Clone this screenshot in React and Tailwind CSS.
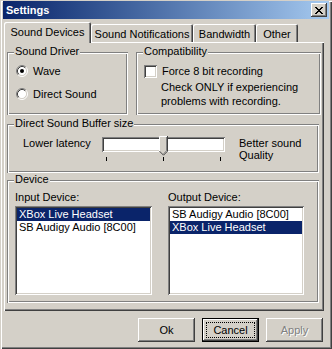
import React from 'react';

const FONT = { fontFamily: '"Liberation Sans", Arial, sans-serif' };

const RAISED =
  'shadow-[inset_-1px_-1px_0_#404040,inset_1px_1px_0_#ffffff,inset_-2px_-2px_0_#808080,inset_2px_2px_0_#d4d0c8]';
const SUNKEN =
  'shadow-[inset_1px_1px_0_#808080,inset_-1px_-1px_0_#ffffff,inset_2px_2px_0_#404040,inset_-2px_-2px_0_#d4d0c8]';
const ETCHED =
  'shadow-[inset_1px_1px_0_#808080,inset_-1px_-1px_0_#ffffff,inset_2px_2px_0_#ffffff,inset_-2px_-2px_0_#808080]';

function CloseGlyph() {
  const rows = ['11000011', '01100110', '00111100', '00011000', '00111100', '01100110', '11000011'];
  return (
    <svg width="8" height="7" viewBox="0 0 8 7" shapeRendering="crispEdges">
      {rows.map((r, y) =>
        r.split('').map((c, x) => (c === '1' ? <rect key={`${x}-${y}`} x={x} y={y} width="1" height="1" fill="#000" /> : null))
      )}
    </svg>
  );
}

function Radio({ checked }) {
  return (
    <svg width="12" height="12" viewBox="0 0 12 12" className="shrink-0">
      <circle cx="6" cy="6" r="4.5" fill="#fff" />
      <path d="M2.11 9.89 A5.5 5.5 0 0 1 9.89 2.11" stroke="#808080" fill="none" />
      <path d="M9.89 2.11 A5.5 5.5 0 0 1 2.11 9.89" stroke="#ffffff" fill="none" />
      <path d="M2.82 9.18 A4.5 4.5 0 0 1 9.18 2.82" stroke="#404040" fill="none" />
      <path d="M9.18 2.82 A4.5 4.5 0 0 1 2.82 9.18" stroke="#d4d0c8" fill="none" />
      {checked && <circle cx="6" cy="6" r="2" fill="#000" />}
    </svg>
  );
}

function Group({ title, className, children }) {
  return (
    <div className={`relative ${ETCHED} ${className}`}>
      <span className="absolute left-[7px] top-[-7px] bg-[#d4d0c8] px-px leading-[13px]">{title}</span>
      {children}
    </div>
  );
}

function ListBox({ items, selected }) {
  return (
    <div className={`bg-white p-[2px] w-full h-[89px] ${SUNKEN}`}>
      {items.map((it, i) => (
        <div
          key={it}
          className={`h-[13px] leading-[13px] pl-[2px] whitespace-nowrap ${i === selected ? 'bg-[#0a246a] text-white' : ''}`}
        >
          {it}
        </div>
      ))}
    </div>
  );
}

function Button({ label, isDefault, disabled }) {
  if (isDefault) {
    return (
      <div className="w-[57px] h-[24px] border border-black bg-[#d4d0c8]">
        <div className={`w-full h-full flex items-center justify-center p-[3px] ${RAISED}`}>
          <div className="w-full h-full border border-dotted border-black flex items-center justify-center leading-none">
            {label}
          </div>
        </div>
      </div>
    );
  }
  return (
    <div
      className={`w-[57px] h-[24px] flex items-center justify-center ${RAISED} ${
        disabled ? 'text-[#808080] [text-shadow:1px_1px_0_#ffffff]' : ''
      }`}
    >
      {label}
    </div>
  );
}

export default function App() {
  return (
    <div
      style={FONT}
      className="w-[332px] h-[349px] bg-[#d4d0c8] text-black text-[11px] pt-px px-[3px] shadow-[inset_1px_1px_0_#d4d0c8,inset_2px_2px_0_#ffffff,inset_-1px_-1px_0_#404040,inset_-2px_-2px_0_#808080] overflow-hidden"
    >
      {/* title bar */}
      <div className="h-[18px] flex items-center justify-between pl-[3px] pr-[2px] bg-linear-to-r from-[#0a246a] to-[#a6caf0]">
        <span className="text-white font-bold leading-none">Settings</span>
        <div className={`w-[16px] h-[14px] bg-[#d4d0c8] flex items-center justify-center ${RAISED}`}>
          <CloseGlyph />
        </div>
      </div>

      {/* tabs */}
      <div className="mt-[3px] ml-px h-[20px] flex items-end">
        <div className="relative z-10 -mb-px w-[87px] h-[21px] bg-[#d4d0c8] rounded-tl-[2px] rounded-tr-[2px] shadow-[inset_1px_1px_0_#ffffff,inset_-1px_0_0_#404040,inset_-2px_0_0_#808080] flex justify-center pt-[4px] leading-[13px]">
          Sound Devices
        </div>
        <div className="w-[102px] h-[18px] rounded-tl-[2px] rounded-tr-[2px] shadow-[inset_1px_1px_0_#ffffff,inset_-1px_0_0_#404040,inset_-2px_0_0_#808080] flex justify-center pt-[4px] leading-[13px]">
          Sound Notifications
        </div>
        <div className="w-[63px] h-[18px] rounded-tl-[2px] rounded-tr-[2px] shadow-[inset_1px_1px_0_#ffffff,inset_-1px_0_0_#404040,inset_-2px_0_0_#808080] flex justify-center pt-[4px] leading-[13px]">
          Bandwidth
        </div>
        <div className="w-[42px] h-[18px] rounded-tl-[2px] rounded-tr-[2px] shadow-[inset_1px_1px_0_#ffffff,inset_-1px_0_0_#404040,inset_-2px_0_0_#808080] flex justify-center pt-[4px] leading-[13px]">
          Other
        </div>
      </div>

      {/* panel */}
      <div className="ml-px w-[320px] h-[269px] pt-[10px] px-[3px] shadow-[inset_1px_1px_0_#ffffff,inset_-1px_-1px_0_#404040,inset_-2px_-2px_0_#808080]">
        <div className="flex gap-[8px]">
          <Group title="Sound Driver" className="w-[121px] h-[63px] pt-[13px] pl-[9px]">
            <div className="flex items-center gap-[5px] h-[12px]">
              <Radio checked />
              <span className="leading-[13px]">Wave</span>
            </div>
            <div className="flex items-center gap-[5px] h-[12px] mt-[11px]">
              <Radio />
              <span className="leading-[13px]">Direct Sound</span>
            </div>
          </Group>
          <Group title="Compatibility" className="w-[185px] h-[63px] pt-[13px] pl-[8px]">
            <div className="flex items-center gap-[5px]">
              <div className={`w-[13px] h-[13px] bg-white ${SUNKEN}`} />
              <span className="leading-[13px]">Force 8 bit recording</span>
            </div>
            <div className="ml-[17px] mt-[2px] leading-[14px]">
              Check ONLY if experiencing
              <br />
              problems with recording.
            </div>
          </Group>
        </div>

        <Group title="Direct Sound Buffer size" className="mt-[9px] w-[312px] h-[49px] pt-[12px] pl-[16px] flex">
          <div className="w-[79px] leading-[13px] pt-[1px]">Lower latency</div>
          <div className="relative w-[123px] h-[30px]">
            <div className={`mt-px w-[123px] h-[15px] bg-white ${SUNKEN}`} />
            <svg className="absolute left-[57px] top-0" width="9" height="20" viewBox="0 0 9 20">
              <polygon points="0,0 8,0 8,15 4,19 0,15" fill="#d4d0c8" />
              <polyline points="0.5,15 0.5,0.5 8,0.5" stroke="#ffffff" fill="none" />
              <polyline points="8.5,0 8.5,15.2 4.5,19.2 0.5,15.2" stroke="#404040" fill="none" />
              <polyline points="7.5,1 7.5,14.8 4.5,17.8" stroke="#808080" fill="none" />
            </svg>
            <div className="absolute left-[4px] top-[21px] w-px h-[4px] bg-black" />
            <div className="absolute left-[61px] top-[21px] w-px h-[4px] bg-black" />
            <div className="absolute left-[118px] top-[21px] w-px h-[4px] bg-black" />
          </div>
          <div className="ml-[14px] leading-[12px] pt-[1px]">
            Better sound
            <br />
            Quality
          </div>
        </Group>

        <Group title="Device" className="mt-[7px] w-[312px] h-[123px] pt-[11px] pl-[8px] flex gap-[16px]">
          <div className="w-[137px]">
            <div className="leading-[13px] h-[15px]">Input Device:</div>
            <ListBox items={['XBox Live Headset', 'SB Audigy Audio [8C00]']} selected={0} />
          </div>
          <div className="w-[136px]">
            <div className="leading-[13px] h-[15px]">Output Device:</div>
            <ListBox items={['SB Audigy Audio [8C00]', 'XBox Live Headset']} selected={1} />
          </div>
        </Group>
      </div>

      {/* buttons */}
      <div className="mt-[7px] ml-px w-[319px] flex justify-end gap-[7px]">
        <Button label="Ok" />
        <Button label="Cancel" isDefault />
        <Button label="Apply" disabled />
      </div>
    </div>
  );
}
